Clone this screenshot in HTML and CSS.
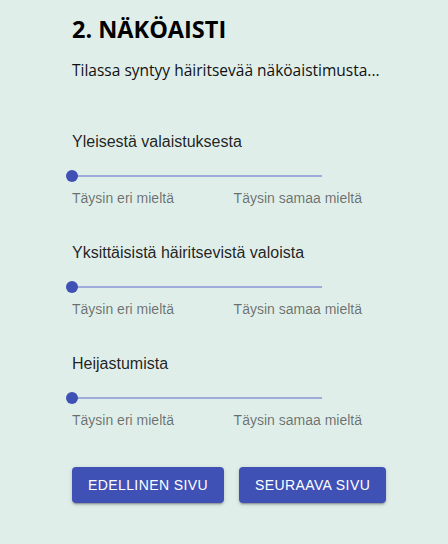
FILE: index.html
```html
<!DOCTYPE html>
<html lang="fi">
<head>
<meta charset="utf-8">
<link rel="stylesheet" href="styles.css">
</head>
<body>
<main class="page">
  <h1 class="title">2. NÄKÖAISTI</h1>
  <p class="intro">Tilassa syntyy häiritsevää näköaistimusta...</p>

  <section class="question">
    <div class="q-label">Yleisestä valaistuksesta</div>
    <div class="slider"><span class="track"></span><span class="thumb"></span></div>
    <div class="scale"><span>Täysin eri mieltä</span><span>Täysin samaa mieltä</span></div>
  </section>

  <section class="question">
    <div class="q-label">Yksittäisistä häiritsevistä valoista</div>
    <div class="slider"><span class="track"></span><span class="thumb"></span></div>
    <div class="scale"><span>Täysin eri mieltä</span><span>Täysin samaa mieltä</span></div>
  </section>

  <section class="question">
    <div class="q-label">Heijastumista</div>
    <div class="slider"><span class="track"></span><span class="thumb"></span></div>
    <div class="scale"><span>Täysin eri mieltä</span><span>Täysin samaa mieltä</span></div>
  </section>

  <div class="actions">
    <button class="btn">Edellinen sivu</button>
    <button class="btn">Seuraava sivu</button>
  </div>
</main>
</body>
</html>
```
FILE: styles.css
```css
html, body {
  margin: 0;
  padding: 0;
  background: #e0eeea;
  height: 100%;
}
.page {
  padding: 13px 0 0 72px;
  font-family: "Liberation Sans", Arial, sans-serif;
  color: #111;
}
.title {
  font-family: "Open Sans", sans-serif;
  font-weight: 700;
  font-size: 23.5px;
  line-height: 32px;
  margin: 0;
  color: #000;
}
.intro {
  font-family: "Open Sans", sans-serif;
  font-size: 15.5px;
  line-height: 24px;
  margin: 13px 0 0;
  color: #111;
}
.question {
  width: 290px;
}
.question:first-of-type { margin-top: 48px; }
.question + .question { margin-top: 33px; }
.q-label {
  font-size: 16px;
  line-height: 24px;
  color: rgba(0,0,0,0.87);
}
.slider {
  position: relative;
  width: 250px;
  height: 12px;
  margin-top: 16px;
}
.track {
  display: block;
  position: absolute;
  left: 0;
  right: 0;
  top: 5px;
  height: 2px;
  background: #9fabda;
}
.thumb {
  position: absolute;
  left: -6px;
  top: 0;
  width: 12px;
  height: 12px;
  border-radius: 50%;
  background: #3f51b5;
}
.scale {
  display: flex;
  justify-content: space-between;
  margin-top: 6px;
  font-size: 14px;
  line-height: 20px;
  color: rgba(0,0,0,0.54);
}
.actions {
  display: flex;
  gap: 15px;
  margin-top: 37px;
}
.btn {
  font-family: "Liberation Sans", Arial, sans-serif;
  font-weight: 400;
  font-size: 14px;
  letter-spacing: 0.4px;
  text-transform: uppercase;
  color: #fff;
  background: #3f51b5;
  border: none;
  border-radius: 4px;
  height: 36px;
  padding: 0 16px;
  box-shadow: 0 3px 1px -2px rgba(0,0,0,0.2), 0 2px 2px 0 rgba(0,0,0,0.14), 0 1px 5px 0 rgba(0,0,0,0.12);
}
```
